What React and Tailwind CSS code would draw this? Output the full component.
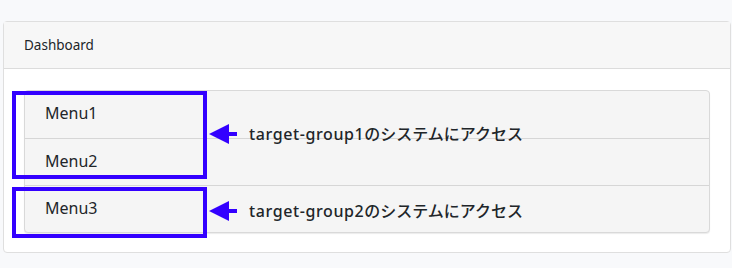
import React from 'react';

const font = { fontFamily: '"Noto Sans", "Noto Sans CJK JP", sans-serif' };

const Arrow = () => (
    <svg width="28" height="20" viewBox="0 0 28 20" className="block shrink-0">
        <polygon points="0,10 20,0 20,20" fill="#3300ff" />
        <rect x="18" y="8" width="10" height="4" fill="#3300ff" />
    </svg>
);

const Note = ({ group }) => (
    <div className="ml-[2px] flex items-center gap-3">
        <Arrow />
        <span className="whitespace-nowrap text-[16px] font-medium">
            <span className="tracking-[0.6px]">target-{group}</span>のシステムにアクセス
        </span>
    </div>
);

const menus = ['Menu1', 'Menu2', 'Menu3'];

const App = () => {
    return (
        <div className="min-h-[268px] w-[732px] bg-[#f8f9fb] pl-[3px] pr-px pt-[21px] text-[#212529]" style={font}>
            <div className="rounded border border-[#dfdfdf] bg-white">
                <div className="flex h-[47px] items-center border-b border-[#dcdcdc] bg-[#f7f7f7] px-5 text-[13.5px]">
                    Dashboard
                </div>
                <div className="pb-[19px] pl-2 pr-5 pt-[21px]">
                    <div className="grid">
                        <div className="col-start-1 row-start-1 ml-3 rounded border border-[#d9d9d9] bg-[#f5f5f5] shadow-[0_1px_1px_rgba(0,0,0,0.08)]">
                            {menus.map((m, i) => (
                                <div
                                    key={m}
                                    className={`flex h-[47px] items-center pb-[3px] pl-5 text-[16px] ${i > 0 ? 'border-t border-[#d6d6d6]' : ''}`}
                                >
                                    {m}
                                </div>
                            ))}
                        </div>

                        {/* annotation layer, overflows the list below */}
                        <div className="pointer-events-none col-start-1 row-start-1 flex h-0 flex-col gap-2 overflow-visible pt-px">
                            <div className="flex shrink-0 items-start">
                                <div className="h-[88px] w-[195px] shrink-0 border-4 border-[#3300ff]" />
                                <div className="mt-[31px]">
                                    <Note group="group1" />
                                </div>
                            </div>
                            <div className="flex shrink-0 items-start">
                                <div className="h-[51px] w-[195px] shrink-0 border-4 border-[#3300ff]" />
                                <div className="mt-[12px]">
                                    <Note group="group2" />
                                </div>
                            </div>
                        </div>
                    </div>
                </div>
            </div>
        </div>
    );
};

export default App;
